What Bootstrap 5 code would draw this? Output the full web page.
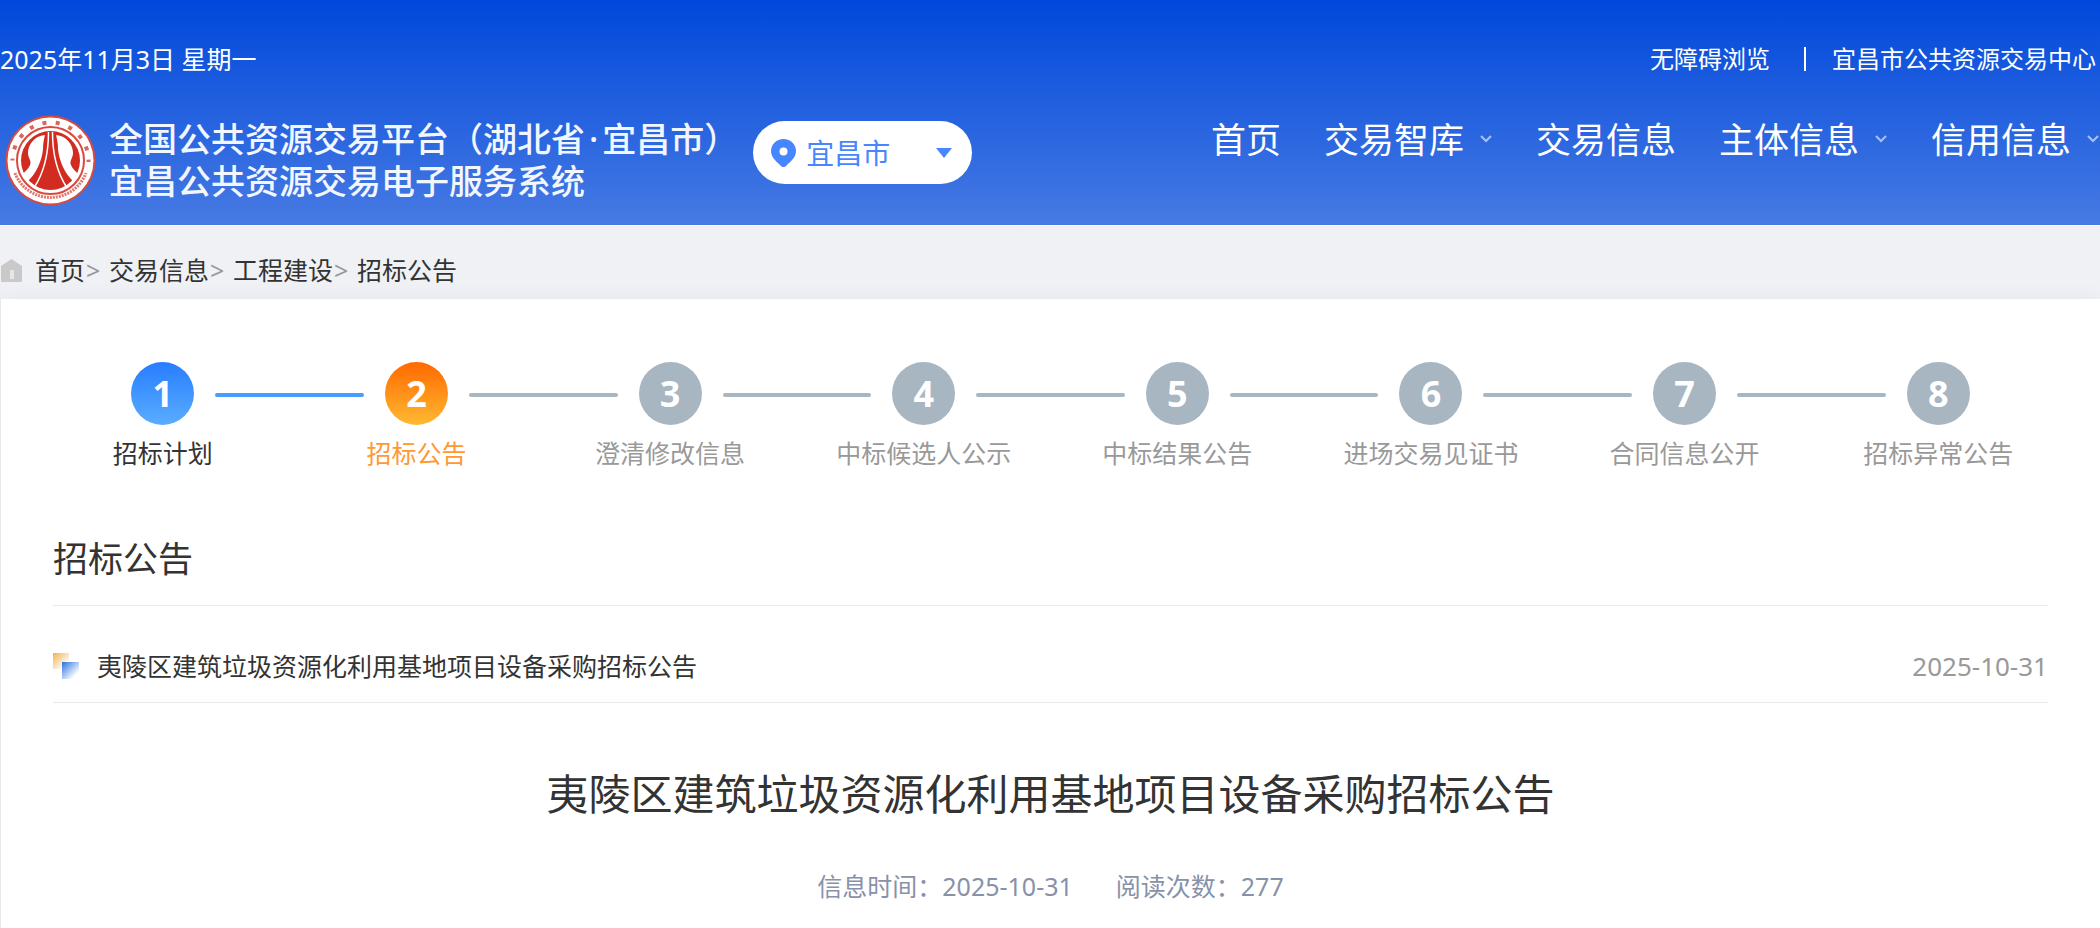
<!DOCTYPE html>
<html lang="zh-CN">
<head>
<meta charset="utf-8">
<meta name="viewport" content="width=device-width, initial-scale=1">
<title>招标公告 - 宜昌公共资源交易电子服务系统</title>
<link href="https://cdn.jsdelivr.net/npm/bootstrap@5.3.0/dist/css/bootstrap.min.css" rel="stylesheet">
<style>
  body { font-family: "Noto Sans", "Noto Sans CJK SC", sans-serif; font-size: 25px; line-height: 36px; color: #333; background: #f0f1f5; }
  a { color: inherit; text-decoration: none; }

  .site-header { background: linear-gradient(#0048db, #477ae3); border-bottom: 1px solid #fff; color: #fff; white-space: nowrap; }
  .top-bar { padding-top: 41px; font-size: 24px; }
  .top-date { font-size: 25px; }
  .top-sep { width: 2px; height: 24px; background: #fff; margin: 0 26px 0 34px; }
  .brand-bar { padding: 38px 0 19px; }
  .brand-seal { width: 91px; height: 91px; margin-left: 5px; }
  .brand-text { font-size: 34px; line-height: 42px; font-weight: 500; margin: 3px 0 0 13px; color: #f2f6ff; }
  .brand-text .dot { padding: 0 4px; }
  .city-pill { width: 219px; height: 63px; margin: 6px 0 0 15px; padding: 0 20px 0 18px; background: #fff; border-radius: 32px; color: #4786ff; }
  .city-pill select { appearance: none; border: 0; background: transparent; color: inherit; font-size: 28px; line-height: 42px; padding: 0; margin-left: 10px; width: 120px; }
  .main-nav { font-size: 35px; line-height: 50px; gap: 43px; }
  .main-nav svg { margin-left: 15px; }

  .crumbs { padding: 26px 0 11px 1px; }
  .crumbs svg { margin-right: 13px; }
  .crumbs .sep { width: 24px; padding-left: 1px; color: #999; }

  .panel { background: #fff; border-left: 1px solid #e8e9ec; box-shadow: 0 0 20px rgba(0, 0, 0, .05); }
  .steps { margin: 0 35px; padding-top: 63px; }
  .step { flex: 1 1 0; min-width: 0; text-align: center; color: #999; }
  .step-num { flex: none; width: 63px; height: 63px; border-radius: 50%; background: #a8b6c2; color: #fff; font-size: 36px; line-height: 63px; font-weight: 700; }
  .rail { flex: 1; height: 4px; margin-top: 3px; background: #a8b6c2; }
  .rail-in { margin-right: 21px; border-radius: 0 2px 2px 0; }
  .rail-out { margin-left: 21px; border-radius: 2px 0 0 2px; }
  .step:first-child .rail-in, .step:last-child .rail-out { visibility: hidden; }
  .step-label { margin-top: 10px; }
  .step.done { color: #333; }
  .step.done .step-num { background: linear-gradient(#277dff, #5aadff); }
  .step.done .rail-out, .step.current .rail-in { background: #499dff; }
  .step.current { color: #ff9933; }
  .step.current .step-num { background: linear-gradient(#ff6900, #ffb932); }

  .content { padding: 0 52px; }
  .section-title { font-size: 35px; line-height: 52px; font-weight: 400; margin: 62px 0 0; padding-bottom: 20px; border-bottom: 1px solid #e9e9e9; }
  .notice { padding: 42px 0 18px; border-bottom: 1px solid #e9e9e9; }
  .notice svg { margin-right: 18px; }
  .notice time { font-size: 26px; color: #999; }
  .article-title { font-size: 42px; line-height: 62px; font-weight: 400; margin: 60px 0 0; }
  .article-info { margin-top: 43px; gap: 43px; color: #8792a8; padding-bottom: 23px; }
</style>
</head>
<body class="d-flex flex-column min-vh-100 overflow-x-hidden">

<header class="site-header overflow-hidden">
  <div class="top-bar d-flex align-items-center pe-1">
    <span class="top-date">2025年11月3日 星期一</span>
    <a class="ms-auto" href="#">无障碍浏览</a>
    <span class="top-sep"></span>
    <a href="#">宜昌市公共资源交易中心</a>
  </div>
  <div class="brand-bar d-flex align-items-start">
    <svg class="brand-seal flex-shrink-0" viewBox="0 0 91 91" aria-hidden="true">
      <defs><clipPath id="sealTop"><rect x="0" y="44" width="91" height="47"/></clipPath></defs>
      <circle cx="45.5" cy="45.5" r="45" fill="#d8493e"/>
      <circle cx="45.5" cy="45.5" r="43" fill="#fff"/>
      <circle cx="45.5" cy="45.500" r="38" fill="none" stroke="#dd665c" stroke-width="4" stroke-dasharray="4 9.4" stroke-dashoffset="2" pathLength="239" transform="rotate(180 45.5 45.5)" clip-path="url(#sealTop)"/>
      <path d="M10 58a38 38 0 0 0 71 0" fill="none" stroke="#e0766d" stroke-width="3" stroke-dasharray="2 1"/>
      <circle cx="45.5" cy="45.5" r="33.500" fill="#fff" stroke="#d8493e" stroke-width="2"/>
      <circle cx="45.5" cy="45.5" r="29.500" fill="#d22c20"/>
      <path id="sealWing" d="M40 20C29 21 23 30 23 38c0 5 4 8 2 12-2 5-6 7-8 10l5 7c9-8 15-21 16-33 0-6 1-10 2-14Z" fill="#fff"/>
      <use href="#sealWing" transform="matrix(-1 0 0 1 91 0)"/>
      <path d="M43.500 17c0 20-3 38-14 55M47.500 17c0 20 3 38 14 55" fill="none" stroke="#fff" stroke-width="1.500"/>
    </svg>
    <div class="brand-text">全国公共资源交易平台（湖北省<span class="dot">·</span>宜昌市）<br>宜昌公共资源交易电子服务系统</div>
    <label class="city-pill d-flex align-items-center flex-shrink-0">
      <svg width="25" height="28" viewBox="0 0 25 28" aria-hidden="true"><path d="M12.500 0C5.500 0 0 5.300 0 12c0 6.500 5.500 10.500 10 15 1.500 1.400 3.500 1.400 5 0 4.500-4.500 10-8.500 10-15C25 5.300 19.500 0 12.500 0Z" fill="#4786ff"/><circle cx="12.500" cy="12.500" r="4" fill="#fff"/></svg>
      <select aria-label="选择城市"><option>宜昌市</option></select>
      <svg class="ms-auto" width="16" height="10" viewBox="0 0 16 10" aria-hidden="true"><path d="M0 0h16L8 10Z" fill="#4786ff"/></svg>
    </label>
    <nav class="main-nav d-flex ms-auto">
      <a href="#">首页</a>
      <a class="d-flex align-items-center" href="#">交易智库<svg width="14" height="14" viewBox="0 0 14 14" aria-hidden="true"><path d="M2 3l5 5 5-5" fill="none" stroke="#a9c2f5" stroke-width="2"/></svg></a>
      <a href="#">交易信息</a>
      <a class="d-flex align-items-center" href="#">主体信息<svg width="14" height="14" viewBox="0 0 14 14" aria-hidden="true"><path d="M2 3l5 5 5-5" fill="none" stroke="#a9c2f5" stroke-width="2"/></svg></a>
      <a class="d-flex align-items-center" href="#">信用信息<svg width="14" height="14" viewBox="0 0 14 14" aria-hidden="true"><path d="M2 3l5 5 5-5" fill="none" stroke="#a9c2f5" stroke-width="2"/></svg></a>
    </nav>
  </div>
</header>

<nav class="crumbs d-flex align-items-center" aria-label="当前位置">
  <svg width="21" height="23" viewBox="0 0 21 23" aria-hidden="true"><path d="M10.500 0L21 7v14.500a1.500 1.500 0 0 1-1.500 1.500h-18A1.500 1.500 0 0 1 0 21.500V7Z" fill="#c9c9c9"/><path d="M9 11h4v9H9z" fill="#e6e6e8"/></svg>
  <a href="#">首页</a><span class="sep">&gt;</span>
  <a href="#">交易信息</a><span class="sep">&gt;</span>
  <a href="#">工程建设</a><span class="sep">&gt;</span>
  <a href="#">招标公告</a>
</nav>

<main class="panel flex-grow-1">
  <div class="steps d-flex">
    <div class="step done"><div class="d-flex align-items-center"><span class="rail rail-in"></span><span class="step-num">1</span><span class="rail rail-out"></span></div><div class="step-label">招标计划</div></div>
    <div class="step current"><div class="d-flex align-items-center"><span class="rail rail-in"></span><span class="step-num">2</span><span class="rail rail-out"></span></div><div class="step-label">招标公告</div></div>
    <div class="step"><div class="d-flex align-items-center"><span class="rail rail-in"></span><span class="step-num">3</span><span class="rail rail-out"></span></div><div class="step-label">澄清修改信息</div></div>
    <div class="step"><div class="d-flex align-items-center"><span class="rail rail-in"></span><span class="step-num">4</span><span class="rail rail-out"></span></div><div class="step-label">中标候选人公示</div></div>
    <div class="step"><div class="d-flex align-items-center"><span class="rail rail-in"></span><span class="step-num">5</span><span class="rail rail-out"></span></div><div class="step-label">中标结果公告</div></div>
    <div class="step"><div class="d-flex align-items-center"><span class="rail rail-in"></span><span class="step-num">6</span><span class="rail rail-out"></span></div><div class="step-label">进场交易见证书</div></div>
    <div class="step"><div class="d-flex align-items-center"><span class="rail rail-in"></span><span class="step-num">7</span><span class="rail rail-out"></span></div><div class="step-label">合同信息公开</div></div>
    <div class="step"><div class="d-flex align-items-center"><span class="rail rail-in"></span><span class="step-num">8</span><span class="rail rail-out"></span></div><div class="step-label">招标异常公告</div></div>
  </div>

  <div class="content">
    <h2 class="section-title">招标公告</h2>
    <div class="notice d-flex align-items-center">
      <svg width="26" height="26" viewBox="0 0 26 26" aria-hidden="true">
        <defs>
          <linearGradient id="markWarm" x1="0" y1="0" x2="1" y2="1"><stop stop-color="#f5b04c"/><stop offset=".8" stop-color="#fff"/></linearGradient>
          <linearGradient id="markCool" x1="0" y1="0" x2="1" y2="1"><stop stop-color="#2a70e0"/><stop offset=".8" stop-color="#fff"/></linearGradient>
        </defs>
        <path d="M0 0h16v9H9v7H0Z" fill="url(#markWarm)"/>
        <path d="M9 9h17v17H9Z" fill="url(#markCool)"/>
      </svg>
      <a href="#">夷陵区建筑垃圾资源化利用基地项目设备采购招标公告</a>
      <time class="ms-auto" datetime="2025-10-31">2025-10-31</time>
    </div>
    <h1 class="article-title text-center">夷陵区建筑垃圾资源化利用基地项目设备采购招标公告</h1>
    <div class="article-info d-flex justify-content-center">
      <span>信息时间：2025-10-31</span>
      <span>阅读次数：277</span>
    </div>
  </div>
</main>

<script src="https://cdn.jsdelivr.net/npm/bootstrap@5.3.0/dist/js/bootstrap.bundle.min.js"></script>
</body>
</html>
